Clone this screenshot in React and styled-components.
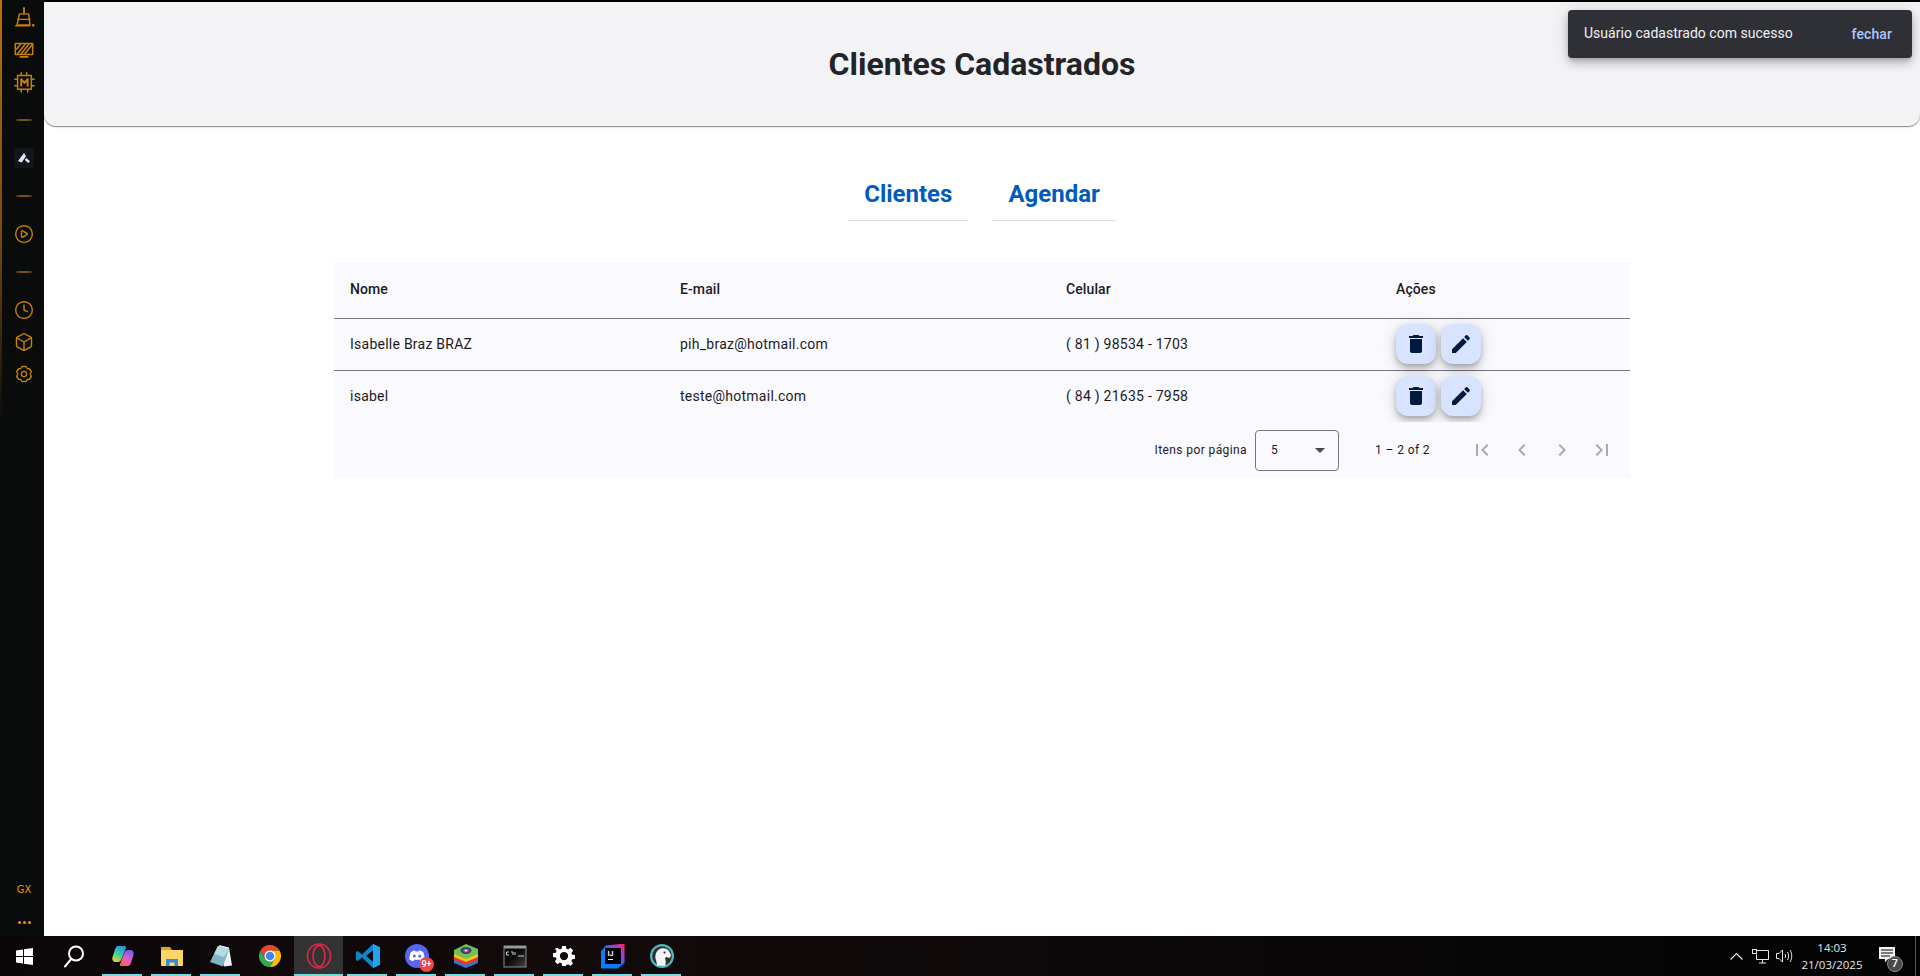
import React from "react";
import styled, { createGlobalStyle } from "styled-components";
import { Clock, Box, CirclePlay } from "lucide-react";

const GlobalStyle = createGlobalStyle`
  html, body {
    margin: 0;
    padding: 0;
    height: 100%;
    background: #fff;
    font-family: Roboto, "Liberation Sans", sans-serif;
    overflow: hidden;
  }
  #root {
    height: 100%;
  }
`;

const Screen = styled.div`
  height: 976px;
  display: flex;
  flex-direction: column;
`;

const Desktop = styled.div`
  flex: 1;
  min-height: 0;
  display: flex;
`;

const Sidebar = styled.aside`
  width: 44px;
  flex-shrink: 0;
  padding-top: 2px;
  box-sizing: border-box;
  display: flex;
  flex-direction: column;
  background: #0a0c0c;
  color: #c77f0c;
  border-left: 2px solid transparent;
  border-image: linear-gradient(180deg, #b8720c 0%, #7a4c0a 25%, #0a0c0c 45%) 1;
`;

const SideSlot = styled.div`
  height: ${(p) => p.$h || 32}px;
  padding-left: 2px;
  display: flex;
  align-items: center;
  justify-content: center;
`;

const SideRule = styled.div`
  width: 16px;
  height: 2px;
  background: linear-gradient(90deg, #3d2a0c, #7d520f 30%, #7d520f 70%, #3d2a0c);
`;

const SideSpacer = styled.div`
  flex: 1;
`;

const AriaTile = styled.div`
  width: 20px;
  height: 20px;
  border-radius: 3px;
  background: #15151f;
  display: flex;
  align-items: center;
  justify-content: center;
`;

const GxLabel = styled.span`
  font-family: "DejaVu Sans", sans-serif;
  font-size: 10px;
  font-weight: 400;
  color: #ef9400;
`;

const Dots = styled.span`
  display: flex;
  gap: 2px;
  i {
    width: 3px;
    height: 3px;
    border-radius: 50%;
    background: #ef9400;
  }
`;

const Main = styled.main`
  flex: 1;
  min-width: 0;
  display: flex;
  flex-direction: column;
  align-items: center;
  background: #fff;
  border-top: 2px solid #000;
  position: relative;
`;

const Header = styled.header`
  align-self: stretch;
  height: 124px;
  display: flex;
  align-items: center;
  justify-content: center;
  background: #f3f3f6;
  border-radius: 3px 3px 12px 12px;
  box-shadow: 0 1px 1px rgba(0, 0, 0, 0.4), 0 1px 3px rgba(0, 0, 0, 0.12);
`;

const Title = styled.h1`
  margin: 0;
  font-size: 32px;
  font-weight: 700;
  line-height: 40px;
  color: #222427;
`;

const Toast = styled.div`
  position: absolute;
  top: 8px;
  right: 8px;
  width: 344px;
  height: 48px;
  box-sizing: border-box;
  padding: 0 16px;
  display: flex;
  align-items: center;
  justify-content: space-between;
  background: #2f3036;
  border-radius: 4px;
  box-shadow: 0 3px 5px -1px rgba(0, 0, 0, 0.2), 0 6px 10px rgba(0, 0, 0, 0.14), 0 1px 18px rgba(0, 0, 0, 0.12);
  font-size: 14px;
  letter-spacing: 0.02px;
  color: #f1f0f4;
`;

const ToastText = styled.span`
  margin-top: -2px;
`;

const ToastAction = styled.span`
  padding-right: 4px;
  font-weight: 500;
  letter-spacing: 0.1px;
  color: #abc7ff;
`;

const Tabs = styled.nav`
  margin-top: 54px;
  display: flex;
  gap: 24px;
`;

const Tab = styled.a`
  padding: 0 16px 12px;
  font-size: 24px;
  font-weight: 700;
  line-height: 28px;
  color: #005cbb;
  border-bottom: 1px solid #e0e0e0;
`;

const TableCard = styled.section`
  margin-top: 41px;
  width: 1296px;
  background: #faf9fd;
`;

const Table = styled.table`
  width: 100%;
  table-layout: fixed;
  border-collapse: separate;
  border-spacing: 0;
  font-size: 14px;
  color: #1a1b1f;
`;

const HeadCell = styled.th`
  height: 54px;
  padding: 0 16px 2px;
  box-sizing: content-box;
  text-align: left;
  font-weight: 500;
  letter-spacing: 0.1px;
  border-bottom: 1px solid #74777f;
`;

const Cell = styled.td`
  height: 51px;
  padding: 0 16px;
  letter-spacing: 0.25px;
  border-bottom: ${(p) => (p.$last ? "none" : "1px solid #74777f")};
`;

const CellText = styled.span`
  position: relative;
  top: -1px;
`;

const Actions = styled.div`
  display: flex;
  gap: 5px;
  margin-top: -1px;
`;

const FabButton = styled.button`
  width: 40px;
  height: 40px;
  padding: 0;
  border: 0;
  border-radius: 12px;
  display: flex;
  align-items: center;
  justify-content: center;
  background: #d7e3ff;
  color: #001b3f;
  box-shadow: 0 3px 5px -1px rgba(0, 0, 0, 0.2), 0 6px 10px rgba(0, 0, 0, 0.14), 0 1px 18px rgba(0, 0, 0, 0.12);
`;

const Paginator = styled.div`
  position: relative;
  height: 56px;
  padding-right: 8px;
  display: flex;
  align-items: center;
  justify-content: flex-end;
  background: #faf9fd;
  font-size: 12px;
  letter-spacing: 0.4px;
  color: #1a1b1f;
`;

const PageLabel = styled.span`
  margin-right: 8px;
`;

const PageSelect = styled.div`
  width: 84px;
  height: 41px;
  box-sizing: border-box;
  padding: 0 13px 0 15px;
  display: flex;
  align-items: center;
  justify-content: space-between;
  border: 1px solid #74777f;
  border-radius: 4px;
`;

const Caret = styled.i`
  width: 0;
  height: 0;
  border-left: 5px solid transparent;
  border-right: 5px solid transparent;
  border-top: 5px solid #44474e;
`;

const PageRange = styled.span`
  margin: 0 32px 0 36px;
`;

const PageNav = styled.span`
  width: 40px;
  height: 40px;
  display: flex;
  align-items: center;
  justify-content: center;
  color: #a9a9ae;
`;

const Taskbar = styled.footer`
  height: 40px;
  flex-shrink: 0;
  display: flex;
  align-items: stretch;
  background: linear-gradient(90deg, #0b0708 0%, #120a0b 30%, #0c0809 60%, #050505 85%, #030303 100%);
`;

const TaskButton = styled.div`
  position: relative;
  width: 49px;
  display: flex;
  align-items: center;
  justify-content: center;
  background: ${(p) => (p.$active ? "#343334" : "transparent")};

  &::after {
    content: "";
    display: ${(p) => (p.$open ? "block" : "none")};
    position: absolute;
    bottom: 0;
    left: ${(p) => (p.$active ? 0 : 4)}px;
    right: ${(p) => (p.$active ? 0 : 5)}px;
    height: 2px;
    background: #76d9e0;
  }
`;

const DiscordBadge = styled.span`
  position: absolute;
  right: 7px;
  bottom: 4px;
  width: 15px;
  height: 15px;
  border-radius: 50%;
  background: #e8474c;
  color: #fff;
  font-size: 9px;
  font-weight: 500;
  line-height: 15px;
  text-align: center;
`;

const IdeTile = styled.div`
  width: 24px;
  height: 25px;
  display: flex;
  align-items: center;
  justify-content: center;
  background: linear-gradient(45deg, #087cfa 0%, #087cfa 50%, #9d3fd6 72%, #fe2857 100%);
  clip-path: polygon(22% 8%, 100% 0, 100% 78%, 72% 100%, 0 100%, 0 32%);
`;

const IdeInner = styled.div`
  width: 16px;
  height: 16px;
  padding: 2px 0 0 3px;
  box-sizing: border-box;
  background: #000;
  color: #fff;
  font-size: 7px;
  font-weight: 700;
  line-height: 8px;

  &::after {
    content: "";
    display: block;
    width: 5px;
    height: 1px;
    margin-top: 1px;
    background: #fff;
  }
`;

const Tray = styled.div`
  margin-left: auto;
  display: flex;
  align-items: center;
  color: #e8e8e8;
`;

const TrayIcon = styled.span`
  width: 24px;
  display: flex;
  justify-content: center;
`;

const TrayClock = styled.div`
  width: 70px;
  margin-left: 1px;
  display: flex;
  flex-direction: column;
  align-items: center;
  gap: 3px;
  font-family: "Open Sans", sans-serif;
  font-size: 11.5px;
  line-height: 14px;
  color: #e6e6e6;
`;

const Notifications = styled.div`
  position: relative;
  width: 48px;
  height: 100%;
  box-sizing: border-box;
  padding: 0 8px 2px 0;
  display: flex;
  align-items: center;
  justify-content: center;
`;

const NotifyBadge = styled.span`
  position: absolute;
  left: 20px;
  top: 20px;
  width: 16px;
  height: 16px;
  box-sizing: border-box;
  border-radius: 50%;
  background: #4a4a4a;
  border: 1px solid #888;
  color: #fff;
  font-size: 11px;
  font-weight: 500;
  line-height: 14px;
  text-align: center;
`;

const ShowDesktop = styled.div`
  width: 1px;
  height: 100%;
  background: #555;
  margin-right: 4px;
`;

function Stroke({ children, size = 22 }) {
  return (
    <svg width={size} height={size} viewBox="0 0 24 24" fill="none" stroke="currentColor" strokeWidth="1.6" strokeLinejoin="round" strokeLinecap="round">
      {children}
    </svg>
  );
}

function Material({ d, size = 24 }) {
  return (
    <svg width={size} height={size} viewBox="0 0 24 24" fill="currentColor">
      <path d={d} />
    </svg>
  );
}

const MD = {
  trash: "M6 19c0 1.1.9 2 2 2h8c1.1 0 2-.9 2-2V7H6v12zM19 4h-3.5l-1-1h-5l-1 1H5v2h14V4z",
  edit: "M3 17.25V21h3.75L17.81 9.94l-3.75-3.75L3 17.25zM20.71 7.04c.39-.39.39-1.02 0-1.41l-2.34-2.34c-.39-.39-1.02-.39-1.41 0l-1.83 1.83 3.75 3.75 1.83-1.83z",
  first: "M18.41 16.59L13.82 12l4.59-4.59L17 6l-6 6 6 6zM6 6h2v12H6z",
  prev: "M15.41 7.41L14 6l-6 6 6 6 1.41-1.41L10.83 12z",
  next: "M10 6L8.59 7.41 13.17 12l-4.58 4.59L10 18l6-6z",
  last: "M5.59 7.41L10.18 12l-4.59 4.59L7 18l6-6-6-6zM16 6h2v12h-2z",
};

const clients = [
  { nome: "Isabelle Braz BRAZ", email: "pih_braz@hotmail.com", celular: "( 81 ) 98534 - 1703" },
  { nome: "isabel", email: "teste@hotmail.com", celular: "( 84 ) 21635 - 7958" },
];

function GxSidebar() {
  return (
    <Sidebar>
      <SideSlot>
        <Stroke>
          <path d="M12 1v6" strokeWidth="2" />
          <path d="M7 7.500h10l1.500 12H4.500z" />
          <path d="M5.500 13.500h13" />
          <path d="M3 20.500h15" />
          <circle cx="22" cy="20" r="0.7" />
        </Stroke>
      </SideSlot>
      <SideSlot>
        <Stroke>
          <rect x="2.500" y="5" width="19" height="12" />
          <path d="M5 16l8-10M9 16l8-10M13 16l8-10M4 11l4-5" strokeWidth="1.700" />
          <path d="M8 19.500h8" strokeWidth="2" />
        </Stroke>
      </SideSlot>
      <SideSlot>
        <Stroke>
          <rect x="5" y="5" width="15" height="15" />
          <path d="M9 2v3M15 2v3M2 9h3M2 16h3M20 9h3M20 16h3M9 20v3M16 20v3" />
          <path d="M9 16V9l3.500 4L16 9v7" strokeWidth="2.200" />
        </Stroke>
      </SideSlot>
      <SideSlot $h={44}><SideRule /></SideSlot>
      <SideSlot>
        <AriaTile>
          <svg width="12" height="10" viewBox="0 0 12 10" fill="#e8e8ee">
            <path d="M6 0l2 3.200-4.400 6.400L0 8zM8.200 5L12 8.200 10.200 10 6.800 7z" />
          </svg>
        </AriaTile>
      </SideSlot>
      <SideSlot $h={44}><SideRule /></SideSlot>
      <SideSlot><CirclePlay size={20} strokeWidth={1.7} /></SideSlot>
      <SideSlot $h={44}><SideRule /></SideSlot>
      <SideSlot><Clock size={20} strokeWidth={1.7} /></SideSlot>
      <SideSlot><Box size={20} strokeWidth={1.7} /></SideSlot>
      <SideSlot>
        <Stroke size={20}>
          <path d="M9.500 3h5l1.300 2.400 2.700.3 2.300 3.300-1.300 3 1.300 3-2.300 3.300-2.700.3L14.500 21h-5l-1.300-2.400-2.700-.3L3.200 15l1.300-3-1.300-3 2.300-3.300 2.700-.3z" />
          <circle cx="12" cy="12" r="3.200" />
        </Stroke>
      </SideSlot>
      <SideSpacer />
      <SideSlot $h={28}><GxLabel>GX</GxLabel></SideSlot>
      <SideSlot $h={5} />
      <SideSlot $h={28}><Dots><i /><i /><i /></Dots></SideSlot>
    </Sidebar>
  );
}

function AppIcons() {
  return (
    <>
      <TaskButton>
        <svg width="17" height="17" viewBox="0 0 17 17" fill="#fff">
          <path d="M0 2.400l7-1v6.600H0zM8 1.200L17 0v8H8zM0 9h7v6.600l-7-1zM8 9h9v8l-9-1.200z" />
        </svg>
      </TaskButton>
      <TaskButton>
        <svg width="24" height="24" viewBox="0 0 24 24" fill="none" stroke="#fff" strokeWidth="2">
          <circle cx="14" cy="9.500" r="7" />
          <path d="M9.200 15L3 22.500" strokeLinecap="round" />
        </svg>
      </TaskButton>
      <TaskButton $open>
        <svg width="24" height="24" viewBox="0 0 24 24">
          <defs>
            <linearGradient id="cpA" x1="0.700" y1="0" x2="0.200" y2="1">
              <stop offset="0" stopColor="#2b8fe8" />
              <stop offset="0.5" stopColor="#34cfa0" />
              <stop offset="1" stopColor="#f2d21c" />
            </linearGradient>
            <linearGradient id="cpB" x1="0.700" y1="0" x2="0.200" y2="1">
              <stop offset="0" stopColor="#7a5cf0" />
              <stop offset="0.55" stopColor="#e45fc0" />
              <stop offset="1" stopColor="#f9603f" />
            </linearGradient>
          </defs>
          <path d="M7 2h6.500c.9 0 1.500.4 1.800 1L11 14c-.8 2.500-2 4-4 4H4.500C2 18 .8 15.500 1.500 13L4 5.500C4.600 3.300 5.500 2 7 2z" fill="url(#cpA)" />
          <path d="M17 22h-6.500c-.9 0-1.500-.4-1.800-1L13 10c.8-2.500 2-4 4-4h2.500c2.500 0 3.700 2.500 3 5L20 18.500c-.6 2.200-1.500 3.500-3 3.500z" fill="url(#cpB)" />
        </svg>
      </TaskButton>
      <TaskButton $open>
        <svg width="24" height="24" viewBox="0 0 24 24">
          <path d="M1 3h9l2 3h11v5H1z" fill="#e0a31e" />
          <rect x="1" y="6" width="22" height="16" rx="1" fill="#fbd666" />
          <path d="M6 22v-7h12v7h-3.500v-3.500h-5V22z" fill="#2f8fd8" />
        </svg>
      </TaskButton>
      <TaskButton $open>
        <svg width="24" height="24" viewBox="0 0 24 24">
          <path d="M10 1l10 2.500 3 18-8 1z" fill="#eef4f5" />
          <path d="M9 2L1 18l13 4.500L20 5z" fill="#7fb6c4" />
          <path d="M9 2L5 10l10 3 5-8z" fill="#b4dce3" />
        </svg>
      </TaskButton>
      <TaskButton>
        <svg width="24" height="24" viewBox="0 0 24 24">
          <path d="M2.470 6.500A11 11 0 0 1 21.530 6.500L12 6.500 7.240 14.750z" fill="#ea4335" />
          <path d="M2.470 6.500A11 11 0 0 0 12 23L16.760 14.750 7.240 14.750z" fill="#34a853" />
          <path d="M12 23A11 11 0 0 0 21.530 6.500L12 6.500 16.760 14.750z" fill="#fbbc05" />
          <circle cx="12" cy="12" r="5.500" fill="#fff" />
          <circle cx="12" cy="12" r="4.300" fill="#4285f4" />
        </svg>
      </TaskButton>
      <TaskButton $active $open>
        <svg width="26" height="26" viewBox="0 0 26 26" fill="none" stroke="#e0264a" strokeWidth="1.600">
          <ellipse cx="13" cy="13" rx="11.500" ry="12" />
          <ellipse cx="13" cy="13" rx="6" ry="10.500" />
        </svg>
      </TaskButton>
      <TaskButton $open>
        <svg width="26" height="26" viewBox="0 0 26 26">
          <path d="M18 1l7 3.200v17.600L18 25 7 14.500 2.800 18 1 17v-8l1.800-1L7 11.500z" fill="#0d84cc" />
          <path d="M18 1l7 3.200v17.600L18 25z" fill="#22a3ec" />
          <path d="M18 7.500L11 13l7 5.500z" fill="#0a0809" />
        </svg>
      </TaskButton>
      <TaskButton $open>
        <svg width="24" height="24" viewBox="0 0 24 24">
          <circle cx="12" cy="12" r="12" fill="#5865f2" />
          <path d="M6 8c2-1.200 3.500-1.400 4-1.400l.4.800h3.200l.4-.8c.5 0 2 .2 4 1.400 1.200 2.400 1.800 5 1.600 7.400-1.400 1-2.800 1.600-4 1.800l-.9-1.400H9.300l-.9 1.400c-1.200-.2-2.600-.8-4-1.800C4.200 13 4.800 10.400 6 8z" fill="#fff" />
          <circle cx="9.300" cy="12" r="1.500" fill="#5865f2" />
          <circle cx="14.700" cy="12" r="1.500" fill="#5865f2" />
        </svg>
        <DiscordBadge>9+</DiscordBadge>
      </TaskButton>
      <TaskButton $open>
        <svg width="26" height="26" viewBox="0 0 26 26">
          <path d="M1 16l12-4 12 4v4l-12 5-12-5z" fill="#2b77e0" />
          <path d="M1 13l12-5 12 5v4l-12 5-12-5z" fill="#e8352e" />
          <path d="M1 10l12-5 12 5v4l-12 5-12-5z" fill="#f2c51d" />
          <path d="M1 7l12-6 12 5v5l-12 5-12-5z" fill="#6fc24a" />
          <ellipse cx="13" cy="7.500" rx="5.500" ry="3.400" fill="#3a3f78" />
          <ellipse cx="13" cy="7.500" rx="3" ry="1.800" fill="#d23c8c" />
          <ellipse cx="13" cy="7.500" rx="1.400" ry="0.900" fill="#b8e0f0" />
        </svg>
      </TaskButton>
      <TaskButton $open>
        <svg width="24" height="24" viewBox="0 0 24 24">
          <defs>
            <linearGradient id="cmdBg" x1="0" y1="0" x2="1" y2="1">
              <stop offset="0" stopColor="#000" />
              <stop offset="0.5" stopColor="#0c0c0c" />
              <stop offset="1" stopColor="#444" />
            </linearGradient>
          </defs>
          <rect x="1" y="2" width="22" height="21" fill="url(#cmdBg)" stroke="#8a8a8a" />
          <rect x="1" y="2" width="22" height="2.500" fill="#9a9a9a" />
          <path d="M3.500 8h2.500M3.500 8v3h2.500M8 8h2v3M12 8v3M15 12h6" stroke="#ccc" fill="none" />
        </svg>
      </TaskButton>
      <TaskButton $open>
        <svg width="22" height="22" viewBox="0 0 24 24" fill="#fff">
          <path fillRule="evenodd" d="M10 1h4l.6 3.100 1.900.8L19.100 3.100 21.900 6l-1.800 2.600.8 1.900L24 11v4l-3.100.5-.8 1.900 1.800 2.600-2.800 2.900-2.600-1.800-1.900.8L14 23h-4l-.6-3.100-1.900-.8-2.600 1.800L2.100 18l1.800-2.600-.8-1.900L0 13V9l3.100-.5.800-1.900L2.100 4 4.900 3.100l2.600 1.800 1.900-.8zM12 7.500a4.500 4.500 0 1 0 0 9 4.500 4.500 0 0 0 0-9z" />
        </svg>
      </TaskButton>
      <TaskButton $open>
        <IdeTile>
          <IdeInner>IJ</IdeInner>
        </IdeTile>
      </TaskButton>
      <TaskButton $open>
        <svg width="24" height="24" viewBox="0 0 24 24">
          <circle cx="12" cy="12" r="12" fill="#4fb8bc" />
          <circle cx="12" cy="12" r="9.800" fill="#2e3233" />
          <path d="M7 21.500c0-3-1-5-1.500-7C5 11 6 6 11 4.500c3-.8 6 0 7.500 2 .8 1.200 2 3 2.500 5l-1.500 2.500-3.500-1-1 1.500c1 2 1 5 0 7.500z" fill="#f4f4f4" />
          <circle cx="14.500" cy="8.500" r="1" fill="#222" />
        </svg>
      </TaskButton>
    </>
  );
}

function SystemTray() {
  return (
    <Tray>
      <TrayIcon>
        <svg width="13" height="8" viewBox="0 0 13 8" fill="none" stroke="#e8e8e8" strokeWidth="1.200">
          <path d="M0.500 7.500L6.500 1.500l6 6" />
        </svg>
      </TrayIcon>
      <TrayIcon>
        <svg width="17" height="15" viewBox="0 0 17 15" fill="none" stroke="#e8e8e8">
          <path d="M4.500 1.500H16.500V10.500H4.500V5.500M10.500 10.500V14M7 14H14" />
          <rect x="0.500" y="0.500" width="4" height="4" />
        </svg>
      </TrayIcon>
      <TrayIcon>
        <svg width="17" height="14" viewBox="0 0 17 14" fill="none" stroke="#e8e8e8">
          <path d="M0.500 4.500h2.500L6.500 1v12L3 9.500H0.500z" />
          <path d="M9 5c.8 1.200.8 2.800 0 4M11.500 3c1.500 2.400 1.500 5.600 0 8M14 1c2.300 3.600 2.300 8.400 0 12" />
        </svg>
      </TrayIcon>
      <TrayClock>
        <span>14:03</span>
        <span>21/03/2025</span>
      </TrayClock>
      <Notifications>
        <svg width="17" height="16" viewBox="0 0 17 16" fill="#f2f2f2">
          <path fillRule="evenodd" d="M0 0h16v12H9l-3 3.500V12H0zM2 2.500v1h12v-1zM2 5.500v1h12v-1zM2 8.500v1h9v-1z" />
        </svg>
        <NotifyBadge>7</NotifyBadge>
      </Notifications>
      <ShowDesktop />
    </Tray>
  );
}

export default function App() {
  return (
    <Screen>
      <GlobalStyle />
      <Desktop>
        <GxSidebar />
        <Main>
          <Header>
            <Title>Clientes Cadastrados</Title>
          </Header>
          <Toast>
            <ToastText>Usuário cadastrado com sucesso</ToastText>
            <ToastAction>fechar</ToastAction>
          </Toast>
          <Tabs>
            <Tab>Clientes</Tab>
            <Tab>Agendar</Tab>
          </Tabs>
          <TableCard>
            <Table>
              <colgroup>
                <col width="330" />
                <col width="386" />
                <col width="330" />
                <col width="250" />
              </colgroup>
              <thead>
                <tr>
                  <HeadCell>Nome</HeadCell>
                  <HeadCell>E-mail</HeadCell>
                  <HeadCell>Celular</HeadCell>
                  <HeadCell>Ações</HeadCell>
                </tr>
              </thead>
              <tbody>
                {clients.map((c, i) => {
                  const last = i === clients.length - 1;
                  return (
                    <tr key={c.email}>
                      <Cell $last={last}><CellText>{c.nome}</CellText></Cell>
                      <Cell $last={last}><CellText>{c.email}</CellText></Cell>
                      <Cell $last={last}><CellText>{c.celular}</CellText></Cell>
                      <Cell $last={last}>
                        <Actions>
                          <FabButton><Material d={MD.trash} /></FabButton>
                          <FabButton><Material d={MD.edit} /></FabButton>
                        </Actions>
                      </Cell>
                    </tr>
                  );
                })}
              </tbody>
            </Table>
            <Paginator>
              <PageLabel>Itens por página</PageLabel>
              <PageSelect>
                <span>5</span>
                <Caret />
              </PageSelect>
              <PageRange>1 – 2 of 2</PageRange>
              <PageNav><Material d={MD.first} /></PageNav>
              <PageNav><Material d={MD.prev} /></PageNav>
              <PageNav><Material d={MD.next} /></PageNav>
              <PageNav><Material d={MD.last} /></PageNav>
            </Paginator>
          </TableCard>
        </Main>
      </Desktop>
      <Taskbar>
        <AppIcons />
        <SystemTray />
      </Taskbar>
    </Screen>
  );
}
